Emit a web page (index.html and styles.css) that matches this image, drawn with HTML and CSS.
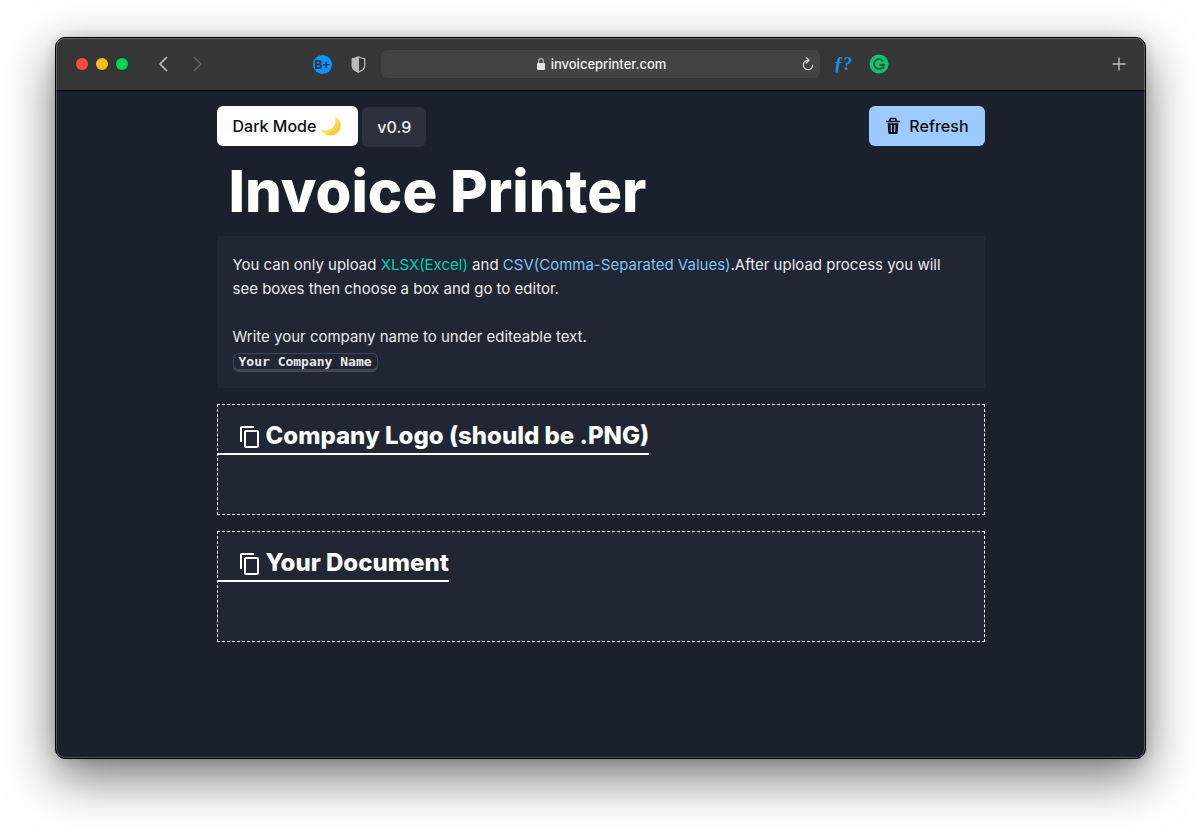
FILE: index.html
```html
<!DOCTYPE html>
<html lang="en">
<head>
<meta charset="utf-8">
<meta name="viewport" content="width=device-width, initial-scale=1">
<title>Invoice Printer</title>
<link rel="stylesheet" href="styles.css">
</head>
<body>
<div class="window">
  <header class="toolbar">
    <div class="toolbar-side toolbar-left">
      <div class="lights"><span class="light red"></span><span class="light yellow"></span><span class="light green"></span></div>
      <nav class="history">
        <button class="tool" type="button" aria-label="Back"><svg width="10" height="16" viewBox="0 0 10 16"><path d="M8.500 1.500 2 8l6.500 6.500" fill="none" stroke="#c4c4c4" stroke-width="1.600" stroke-linecap="round" stroke-linejoin="round"/></svg></button>
        <button class="tool" type="button" aria-label="Forward"><svg width="10" height="16" viewBox="0 0 10 16"><path d="M1.500 1.500 8 8l-6.500 6.500" fill="none" stroke="#606060" stroke-width="1.600" stroke-linecap="round" stroke-linejoin="round"/></svg></button>
      </nav>
      <div class="extensions">
        <button class="tool badge" type="button">B+</button>
        <button class="tool" type="button" aria-label="Privacy report"><svg width="15" height="17" viewBox="0 0 15 17"><path d="M7.500.8C9.500 2 11.500 2.500 13.700 2.700V10c0 3-3 4.800-6.200 6.200C4.300 14.800 1.300 13 1.300 10V2.700C3.500 2.500 5.500 2 7.500.8z" fill="none" stroke="#bababa" stroke-width="1.300" stroke-linejoin="round"/><path d="M7.500.8v15.400C4.300 14.800 1.300 13 1.300 10V2.700C3.500 2.500 5.500 2 7.500.8z" fill="#bababa" stroke="#bababa"/></svg></button>
      </div>
    </div>
    <div class="address">
      <a class="url" href="#"><svg width="8" height="12" viewBox="0 0 8 12"><path d="M1.700 6V3.200a2.300 2.600 0 0 1 4.600 0V6" fill="none" stroke="#b8b8b8" stroke-width="1.200"/><rect y="5" width="8" height="7" rx="1" fill="#e2e2e2"/></svg>invoiceprinter.com</a>
      <button class="tool reload" type="button" aria-label="Reload"><svg width="12" height="14" viewBox="0 0 12 14"><path d="M6.300 3.300A4.700 4.700 0 1 0 10.700 8M4.300.8l2.800 2.500-2.800 2.700" fill="none" stroke="#d8d8d8" stroke-width="1.200" stroke-linecap="round" stroke-linejoin="round"/></svg></button>
    </div>
    <div class="toolbar-side toolbar-right">
      <button class="tool font-tool" type="button">ƒ?</button>
      <button class="tool" type="button" aria-label="Writing assistant"><svg width="20" height="20" viewBox="0 0 20 20"><circle cx="10" cy="10" r="9.500" fill="#0fc27a"/><path d="M14 7.200A4.900 4.900 0 1 0 14.800 10.800H10.500M14.400 11v3.500M12 14h2.800" fill="none" stroke="#275a45" stroke-width="1.900"/></svg></button>
      <button class="tool new-tab" type="button" aria-label="New tab"><svg width="14" height="14" viewBox="0 0 14 14"><path d="M7 .5v13M.5 7h13" stroke="#bdbdbd" stroke-width="1.400"/></svg></button>
    </div>
  </header>
  <main class="page">
    <div class="container">
      <div class="actions">
        <button class="btn btn-light" type="button">Dark Mode
          <svg width="22" height="20" viewBox="0 0 22 20" aria-hidden="true"><defs><linearGradient id="moon" x1="0" y1="0" x2="1" y2="1"><stop offset="0" stop-color="#fff2a0"/><stop offset=".6" stop-color="#fbd94a"/><stop offset="1" stop-color="#eebd3c"/></linearGradient></defs><path d="M14.500.5C19 2.500 21 6 20.800 10c-.3 5.500-4.800 9.500-10 9.500C6 19.500 2.500 17 1 13.300c3.500 1.900 8.500 1.400 11.500-1.600 3.200-3.200 3.700-7.700 2-11.200z" fill="url(#moon)"/></svg>
        </button>
        <button class="btn btn-muted" type="button">v0.9</button>
        <button class="btn btn-blue" type="button"><svg width="16" height="18" viewBox="0 0 16 18" aria-hidden="true"><path d="M1 4.500h14M5 4V2.600q0-1 1-1h4q1 0 1 1V4" fill="none" stroke="#0a0c10" stroke-width="1.500"/><path d="M2.600 6.200h10.800L12.600 16q-.1 1-1.100 1h-7q-1 0-1.100-1z" fill="#0a0c10"/><path d="m6.200 8 .2 7M9.800 8l-.2 7" stroke="#9ecbff" stroke-width="1.200"/></svg>Refresh</button>
      </div>
      <h1 class="title">Invoice Printer</h1>
      <section class="intro">
        <p>You can only upload <span class="xlsx">XLSX(Excel)</span> and <span class="csv">CSV(Comma-Separated Values)</span>.After upload process you will see boxes then choose a box and go to editor.</p>
        <p>Write your company name to under editeable text.<br><kbd class="company" contenteditable="true" spellcheck="false">Your Company Name</kbd></p>
      </section>
      <section class="drop">
        <h2 class="drop-title"><svg width="24" height="24" viewBox="0 0 24 24" aria-hidden="true"><path fill="#fff" d="M16 1H4c-1.100 0-2 .9-2 2v14h2V3h12V1zm3 4H8c-1.100 0-2 .9-2 2v14c0 1.100.9 2 2 2h11c1.100 0 2-.9 2-2V7c0-1.100-.9-2-2-2zm0 16H8V7h11v14z"/></svg>Company Logo (should be .PNG)</h2>
      </section>
      <section class="drop">
        <h2 class="drop-title"><svg width="24" height="24" viewBox="0 0 24 24" aria-hidden="true"><path fill="#fff" d="M16 1H4c-1.100 0-2 .9-2 2v14h2V3h12V1zm3 4H8c-1.100 0-2 .9-2 2v14c0 1.100.9 2 2 2h11c1.100 0 2-.9 2-2V7c0-1.100-.9-2-2-2zm0 16H8V7h11v14z"/></svg>Your Document</h2>
      </section>
    </div>
  </main>
</div>
</body>
</html>
```
FILE: styles.css
```css
* { box-sizing: border-box; }
body {
  margin: 0;
  min-height: 100vh;
  padding: 37px 55px 73px;
  display: flex;
  background: #fff;
  font-family: Inter, "Liberation Sans", sans-serif;
  font-size: 15px;
  line-height: 24px;
  color: #ebebec;
}
svg { flex: none; }
button { font-family: inherit; cursor: pointer; }
h1, h2, p { margin: 0; }
.window {
  flex: 1;
  min-width: 0;
  display: flex;
  flex-direction: column;
  overflow: hidden;
  border: 1px solid #000;
  border-radius: 10px;
  background: #1a202c;
  box-shadow: 0 18px 50px rgba(0, 0, 0, .55), 0 0 12px rgba(0, 0, 0, .15);
  position: relative;
}
.window::after {
  content: "";
  position: absolute;
  inset: 0;
  border: 1px solid rgba(255, 255, 255, .24);
  border-radius: 9px;
  pointer-events: none;
}
.toolbar {
  height: 53px;
  display: grid;
  grid-template-columns: 1fr minmax(0, 439px) 1fr;
  align-items: center;
  background: #363636;
  border-bottom: 1px solid #000;
}
.toolbar-side { display: flex; align-items: center; }
.toolbar-left { padding: 0 15px 0 20px; gap: 30px; }
.lights { display: flex; gap: 8px; }
.light { width: 12px; height: 12px; border-radius: 50%; }
.red { background: #ff4a4a; }
.yellow { background: #ffbd12; }
.green { background: #00d64b; }
.history { display: flex; gap: 25px; }
.extensions { display: flex; align-items: center; gap: 19px; margin-left: auto; }
.tool { display: flex; padding: 0; border: 0; background: none; color: inherit; }
.badge {
  width: 19px;
  height: 19px;
  align-items: center;
  justify-content: center;
  border-radius: 50%;
  background: #0a95ff;
  color: #26384c;
  font-size: 12px;
  font-weight: 800;
  line-height: 19px;
}
.address {
  height: 28px;
  display: flex;
  align-items: center;
  border-radius: 6px;
  background: #444;
}
.url {
  flex: 1;
  display: flex;
  align-items: center;
  justify-content: center;
  gap: 6px;
  padding-left: 20px;
  color: #f2f2f2;
  font-size: 13px;
  font-weight: 500;
  text-decoration: none;
}
.reload { margin-right: 6px; }
.toolbar-right { padding: 0 19px 0 14px; gap: 17px; }
.font-tool {
  color: #1592f5;
  font: italic 700 18px/24px "Liberation Serif", serif;
}
.new-tab { margin-left: auto; }
.page { flex: 1; padding: 15px 16px; }
.container { max-width: 768px; margin: 0 auto; }
.actions { display: flex; gap: 4px; }
.btn {
  height: 40px;
  display: flex;
  align-items: center;
  padding: 0 16px;
  border: 0;
  border-radius: 6px;
  font-size: 16px;
  font-weight: 500;
}
.btn-light { gap: 4px; background: #fff; color: #0a0c10; }
.btn-muted { margin-top: 1px; padding: 0 15px; background: #2d313e; color: #ededee; }
.btn-blue { gap: 8px; margin-left: auto; background: #9ecbff; color: #0a0c10; }
.title {
  padding: 0 12px;
  color: #fff;
  font-size: 58px;
  font-weight: 800;
  line-height: 89px;
}
.intro {
  display: grid;
  gap: 24px;
  padding: 17px 16px 15px;
  background: #202634;
}
.xlsx { color: #00cdb4; }
.csv { color: #7fc4f2; }
.company {
  display: inline-block;
  padding: 0 5px;
  border: 1px solid #414754;
  border-bottom-width: 3px;
  border-radius: 6px;
  font: 700 13px/15px "DejaVu Sans Mono", monospace;
}
.drop {
  height: 111px;
  margin-top: 16px;
  border: 1px dashed #fff;
  background: #202634;
}
.drop-title {
  width: fit-content;
  display: flex;
  align-items: center;
  gap: 4px;
  padding: 13px 0 0 20px;
  border-bottom: 2px solid #fff;
  color: #fff;
  font-size: 24px;
  font-weight: 800;
  line-height: 35px;
}
.drop-title svg { margin-top: 3px; }
```
